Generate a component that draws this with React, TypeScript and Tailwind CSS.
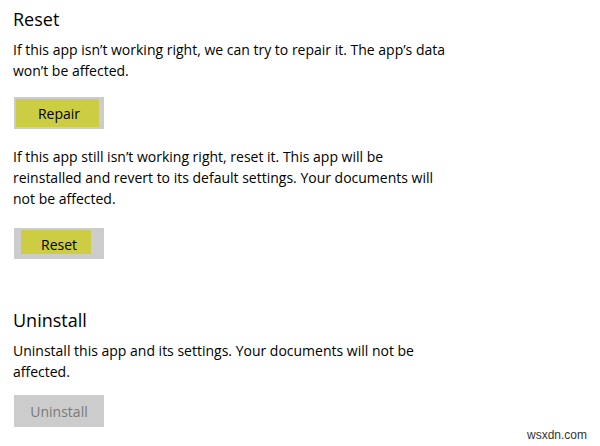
export default function App() {
  const body = "text-[14px] leading-[21px] whitespace-nowrap";

  return (
    <div
      className="relative w-[600px] h-[446px] overflow-hidden bg-white text-black pl-[13px] pt-[7px]"
      style={{ fontFamily: '"Open Sans", "Noto Sans", sans-serif' }}
    >
      {/* Reset section */}
      <h2 className="text-[18px] leading-[24px] font-normal">Reset</h2>
      <p className={`${body} mt-[8px]`}>
        If this app isn’t working right, we can try to repair it. The app’s data
        <br />
        won’t be affected.
      </p>

      <button className="relative block ml-[1px] mt-[16px] w-[90px] h-[32px] bg-[#cccccc]">
        <span className="absolute left-[2px] top-[2px] w-[83px] h-[28px] bg-[#cdcd44]" />
        <span className="relative text-[14px]">Repair</span>
      </button>

      <p className={`${body} mt-[17px]`}>
        If this app still isn’t working right, reset it. This app will be
        <br />
        reinstalled and revert to its default settings. Your documents will
        <br />
        not be affected.
      </p>

      <button className="relative block ml-[1px] mt-[19px] w-[90px] h-[31px] bg-[#cccccc]">
        <span className="absolute left-[7px] top-[2px] w-[70px] h-[24px] bg-[#cdcd44]" />
        <span className="relative text-[14px]">Reset</span>
      </button>

      {/* Uninstall section */}
      <h2 className="text-[18px] leading-[24px] font-normal mt-[49px]">Uninstall</h2>
      <p className={`${body} mt-[8px]`}>
        Uninstall this app and its settings. Your documents will not be
        <br />
        affected.
      </p>

      <button
        disabled
        className="block ml-[1px] mt-[13px] w-[90px] h-[32px] bg-[#cccccc] text-[14px] text-[#7a7a7a]"
      >
        Uninstall
      </button>

      <span
        className="absolute left-[527px] top-[428px] text-[12px] leading-[14px] text-[#333333]"
        style={{ fontFamily: '"Liberation Sans", Arial, sans-serif' }}
      >
        wsxdn.com
      </span>
    </div>
  );
}
